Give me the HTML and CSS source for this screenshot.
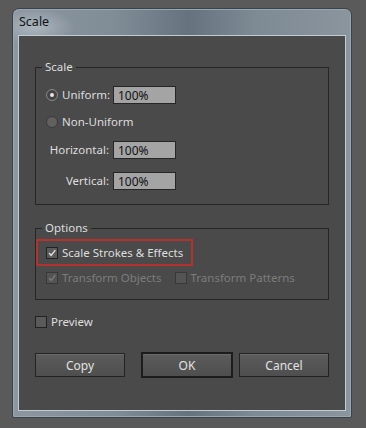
FILE: index.html
```html
<!DOCTYPE html>
<html>
<head>
<meta charset="utf-8">
<link rel="stylesheet" href="styles.css">
</head>
<body>
<div class="window">
  <div class="titlebar">Scale</div>
  <div class="content">
    <fieldset class="group scale-group">
      <legend>Scale</legend>
      <div class="row r1">
        <div class="cell"><span class="radio checked"></span><span class="lbl">Uniform:</span></div>
        <input class="field" type="text" value="100%">
      </div>
      <div class="row r2">
        <div class="cell wide"><span class="radio"></span><span class="lbl">Non-Uniform</span></div>
      </div>
      <div class="row r3">
        <div class="cell right"><span class="lbl">Horizontal:</span></div>
        <input class="field" type="text" value="100%">
      </div>
      <div class="row r4">
        <div class="cell right"><span class="lbl">Vertical:</span></div>
        <input class="field" type="text" value="100%">
      </div>
    </fieldset>

    <fieldset class="group options-group">
      <legend>Options</legend>
      <div class="highlight">
        <span class="check on"><svg viewBox="0 0 12 12" width="12" height="12"><polyline points="2.5,6 5,9 10,2.5" fill="none" stroke="#e4e4e4" stroke-width="1.6"/></svg></span>
        <span class="lbl">Scale Strokes &amp; Effects</span>
      </div>
      <div class="row disabled-row">
        <span class="check dis on"><svg viewBox="0 0 12 12" width="12" height="12"><polyline points="2.5,6 5,9 10,2.5" fill="none" stroke="#7c7c7c" stroke-width="1.6"/></svg></span>
        <span class="lbl dim">Transform Objects</span>
        <span class="check dis second"></span>
        <span class="lbl dim">Transform Patterns</span>
      </div>
    </fieldset>

    <div class="preview">
      <span class="check"></span>
      <span class="lbl">Preview</span>
    </div>

    <div class="buttons">
      <button class="btn">Copy</button>
      <button class="btn default">OK</button>
      <button class="btn">Cancel</button>
    </div>
  </div>
</div>
</body>
</html>
```

FILE: styles.css
```css
html, body {
  margin: 0;
  padding: 0;
}
body {
  background: #5a5a5a;
  width: 366px;
  height: 428px;
  overflow: hidden;
  font-family: "Noto Sans", "Open Sans", sans-serif;
  font-size: 11.5px;
}
.window {
  margin: 8px 0 0 12px;
  width: 340px;
  height: 410px;
  box-sizing: border-box;
  border: 1px solid #3a434b;
  border-radius: 7px 7px 2px 2px;
  padding: 0 5px 6px 5px;
  display: flex;
  flex-direction: column;
  background:
    radial-gradient(ellipse 40px 18px at 22px 18px, rgba(200,210,218,0.55), rgba(200,210,218,0) 100%),
    linear-gradient(to right, #8b96a0 0%, #808c96 30%, #66727e 52%, #7e8a94 72%, #8a959e 100%);
  box-shadow: inset 1px 1px 0 #9aa6b0, inset -1px -1px 0 #9aa6b0;
}
.titlebar {
  height: 26px;
  line-height: 26px;
  padding-left: 1px;
  color: #141414;
  font-size: 12.5px;
}
.content {
  flex: 1;
  border: 1px solid #c2cad2;
  background: #4a4a4a;
  padding: 24px 16px 0 16px;
  color: #dedede;
}
.group {
  margin: 0;
  border: 1px solid #262626;
  padding: 12px 0 14px 10px;
  min-width: 0;
}
.group legend {
  padding: 0 3px;
  margin-left: 6px;
  line-height: 14px;
  height: 14px;
  color: #dedede;
}
.scale-group legend {
  margin-left: -4px;
}
.row {
  display: flex;
  align-items: center;
  height: 18px;
}
.r2 { margin-top: 9px; }
.r3 { margin-top: 10px; }
.r4 { margin-top: 13px; }
.cell {
  width: 63px;
  margin-right: 4px;
  display: flex;
  align-items: center;
  white-space: nowrap;
}
.cell.wide { width: auto; }
.cell.right { justify-content: flex-end; }
.lbl {
  line-height: 16px;
  white-space: nowrap;
}
.radio {
  width: 12px;
  height: 12px;
  box-sizing: border-box;
  border-radius: 50%;
  border: 1px solid #3a3a3a;
  background: #606060;
  margin-right: 4px;
  display: flex;
  align-items: center;
  justify-content: center;
  flex: none;
}
.radio.checked {
  border-color: #8a8a8a;
  background: #444;
}
.radio.checked::after {
  content: "";
  width: 4px;
  height: 4px;
  border-radius: 50%;
  background: #e6e6e6;
}
.field {
  width: 63px;
  height: 18px;
  box-sizing: border-box;
  border: 1px solid #262626;
  background: #a4a4a4;
  color: #111;
  font-family: inherit;
  font-size: 12px;
  padding: 0 4px;
  margin: 0;
  outline: none;
}
.options-group {
  margin-top: 16px;
  padding: 4px 0 12px 0;
}
.highlight {
  display: inline-flex;
  align-items: center;
  border: 2px solid #b3322d;
  height: 27px;
  box-sizing: border-box;
  padding: 0 8px 0 8px;
}
.check {
  width: 12px;
  height: 12px;
  box-sizing: border-box;
  border: 1px solid #222;
  background: #5a5a5a;
  margin-right: 4px;
  flex: none;
  display: flex;
  align-items: center;
  justify-content: center;
}
.check svg { display: block; }
.check.dis {
  border-color: #383838;
  background: #545454;
}
.check.second { margin-left: 13px; }
.disabled-row {
  margin-top: 3px;
  padding-left: 10px;
}
.dim { color: #7c7c7c; }
.preview {
  display: flex;
  align-items: center;
  margin-top: 16px;
  height: 12px;
}
.buttons {
  display: flex;
  margin-top: 24px;
  align-items: center;
}
.btn {
  width: 90px;
  height: 24px;
  box-sizing: border-box;
  border: 1px solid #232323;
  background: linear-gradient(#5c5c5c, #4e4e4e);
  box-shadow: inset 0 1px 0 #6a6a6a;
  color: #e2e2e2;
  font-family: inherit;
  font-size: 12px;
  padding: 0;
  margin: 0;
}
.btn.default {
  width: 92px;
  height: 26px;
  border: 2px solid #1c1c1c;
  margin: 0 6px 0 16px;
}
```
